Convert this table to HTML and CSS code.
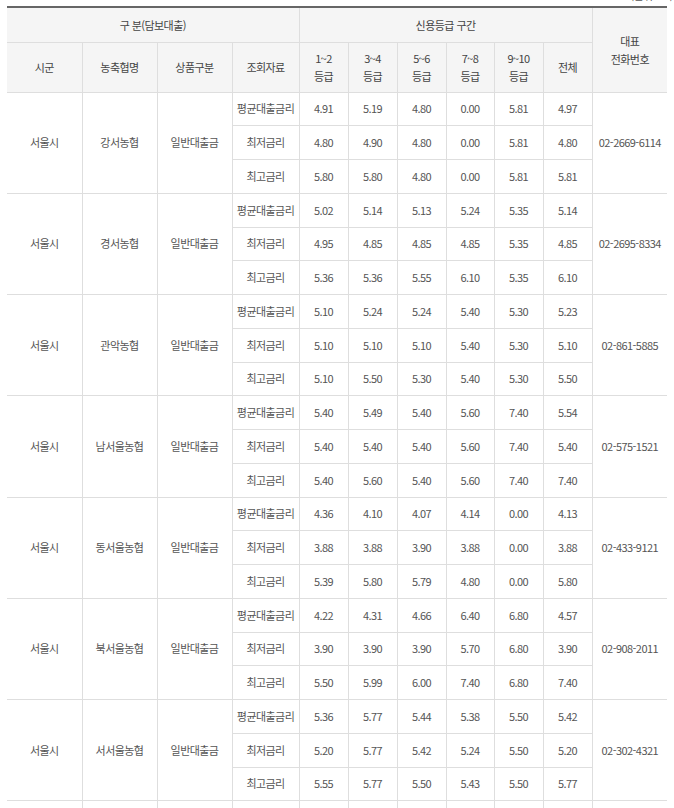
FILE: index.html
```html
<!DOCTYPE html>
<html lang="ko">
<head>
<meta charset="utf-8">
<title>신용등급 구간별 대출금리</title>
<link rel="stylesheet" href="styles.css">
</head>
<body>
<div class="wrap">
  <div class="unit"><span>(단위 : %)</span></div>
  <table class="rate">
    <colgroup>
      <col class="w75"><col class="w75"><col class="w75"><col class="w67">
      <col class="w49"><col class="w49"><col class="w49"><col class="w48"><col class="w49"><col class="w49">
      <col class="w75">
    </colgroup>
    <thead>
      <tr class="h1">
        <th colspan="4">구 분(담보대출)</th>
        <th colspan="6">신용등급 구간</th>
        <th rowspan="2" class="top">대표<br>전화번호</th>
      </tr>
      <tr class="h2">
        <th>시군</th><th>농축협명</th><th>상품구분</th><th>조회자료</th>
        <th>1~2<br>등급</th><th>3~4<br>등급</th><th>5~6<br>등급</th><th>7~8<br>등급</th><th>9~10<br>등급</th><th>전체</th>
      </tr>
    </thead>
    <tbody>
      <tr><td rowspan="3">서울시</td><td rowspan="3">강서농협</td><td rowspan="3">일반대출금</td><td>평균대출금리</td><td>4.91</td><td>5.19</td><td>4.80</td><td>0.00</td><td>5.81</td><td>4.97</td><td rowspan="3">02-2669-6114</td></tr>
      <tr><td>최저금리</td><td>4.80</td><td>4.90</td><td>4.80</td><td>0.00</td><td>5.81</td><td>4.80</td></tr>
      <tr><td>최고금리</td><td>5.80</td><td>5.80</td><td>4.80</td><td>0.00</td><td>5.81</td><td>5.81</td></tr>

      <tr><td rowspan="3">서울시</td><td rowspan="3">경서농협</td><td rowspan="3">일반대출금</td><td>평균대출금리</td><td>5.02</td><td>5.14</td><td>5.13</td><td>5.24</td><td>5.35</td><td>5.14</td><td rowspan="3">02-2695-8334</td></tr>
      <tr><td>최저금리</td><td>4.95</td><td>4.85</td><td>4.85</td><td>4.85</td><td>5.35</td><td>4.85</td></tr>
      <tr><td>최고금리</td><td>5.36</td><td>5.36</td><td>5.55</td><td>6.10</td><td>5.35</td><td>6.10</td></tr>

      <tr><td rowspan="3">서울시</td><td rowspan="3">관악농협</td><td rowspan="3">일반대출금</td><td>평균대출금리</td><td>5.10</td><td>5.24</td><td>5.24</td><td>5.40</td><td>5.30</td><td>5.23</td><td rowspan="3">02-861-5885</td></tr>
      <tr><td>최저금리</td><td>5.10</td><td>5.10</td><td>5.10</td><td>5.40</td><td>5.30</td><td>5.10</td></tr>
      <tr><td>최고금리</td><td>5.10</td><td>5.50</td><td>5.30</td><td>5.40</td><td>5.30</td><td>5.50</td></tr>

      <tr><td rowspan="3">서울시</td><td rowspan="3">남서울농협</td><td rowspan="3">일반대출금</td><td>평균대출금리</td><td>5.40</td><td>5.49</td><td>5.40</td><td>5.60</td><td>7.40</td><td>5.54</td><td rowspan="3">02-575-1521</td></tr>
      <tr><td>최저금리</td><td>5.40</td><td>5.40</td><td>5.40</td><td>5.60</td><td>7.40</td><td>5.40</td></tr>
      <tr><td>최고금리</td><td>5.40</td><td>5.60</td><td>5.40</td><td>5.60</td><td>7.40</td><td>7.40</td></tr>

      <tr><td rowspan="3">서울시</td><td rowspan="3">동서울농협</td><td rowspan="3">일반대출금</td><td>평균대출금리</td><td>4.36</td><td>4.10</td><td>4.07</td><td>4.14</td><td>0.00</td><td>4.13</td><td rowspan="3">02-433-9121</td></tr>
      <tr><td>최저금리</td><td>3.88</td><td>3.88</td><td>3.90</td><td>3.88</td><td>0.00</td><td>3.88</td></tr>
      <tr><td>최고금리</td><td>5.39</td><td>5.80</td><td>5.79</td><td>4.80</td><td>0.00</td><td>5.80</td></tr>

      <tr><td rowspan="3">서울시</td><td rowspan="3">북서울농협</td><td rowspan="3">일반대출금</td><td>평균대출금리</td><td>4.22</td><td>4.31</td><td>4.66</td><td>6.40</td><td>6.80</td><td>4.57</td><td rowspan="3">02-908-2011</td></tr>
      <tr><td>최저금리</td><td>3.90</td><td>3.90</td><td>3.90</td><td>5.70</td><td>6.80</td><td>3.90</td></tr>
      <tr><td>최고금리</td><td>5.50</td><td>5.99</td><td>6.00</td><td>7.40</td><td>6.80</td><td>7.40</td></tr>

      <tr><td rowspan="3">서울시</td><td rowspan="3">서서울농협</td><td rowspan="3">일반대출금</td><td>평균대출금리</td><td>5.36</td><td>5.77</td><td>5.44</td><td>5.38</td><td>5.50</td><td>5.42</td><td rowspan="3">02-302-4321</td></tr>
      <tr><td>최저금리</td><td>5.20</td><td>5.77</td><td>5.42</td><td>5.24</td><td>5.50</td><td>5.20</td></tr>
      <tr><td>최고금리</td><td>5.55</td><td>5.77</td><td>5.50</td><td>5.43</td><td>5.50</td><td>5.77</td></tr>

      <tr class="tail"><td></td><td></td><td></td><td></td><td></td><td></td><td></td><td></td><td></td><td></td><td></td></tr>
    </tbody>
  </table>
</div>
</body>
</html>
```

FILE: styles.css
```css
html, body {
  margin: 0;
  padding: 0;
  background: #fff;
}
body {
  font-family: "Noto Sans CJK KR", "Noto Sans", sans-serif;
  font-size: 11px;
  letter-spacing: -0.55px;
  color: #555;
}
.wrap {
  padding: 0 7px;
}
.unit {
  height: 6px;
  display: flex;
  justify-content: flex-end;
  align-items: flex-end;
  margin-right: -6px;
}
.unit span {
  line-height: 16px;
  color: #555;
  white-space: nowrap;
  transform: translateY(-3px);
}
.rate {
  width: 660px;
  table-layout: fixed;
  border-collapse: collapse;
  border-top: 2px solid #666;
}
.w75 { width: 75px; }
.w67 { width: 67px; }
.w49 { width: 49px; }
.w48 { width: 48px; }
.rate th,
.rate td {
  border: 1px solid #dedede;
  text-align: center;
  vertical-align: middle;
  padding: 0;
  font-weight: normal;
  line-height: 17px;
}
.rate thead th {
  line-height: 18px;
}
.rate tr > :first-child { border-left: 0; }
.rate th.top { border-right: 0; }
.rate tr > td:last-child { border-right: 0; }
.rate tr.h2 > th:last-child { border-right: 1px solid #dedede; }
.rate thead th {
  background: #f5f5f5;
  color: #444;
}
.rate tr.h1 { height: 35px; }
.rate tr.h2 { height: 50px; }
.rate tbody tr { height: 33.76px; }
.rate tbody tr.tail { height: 34px; }
```
